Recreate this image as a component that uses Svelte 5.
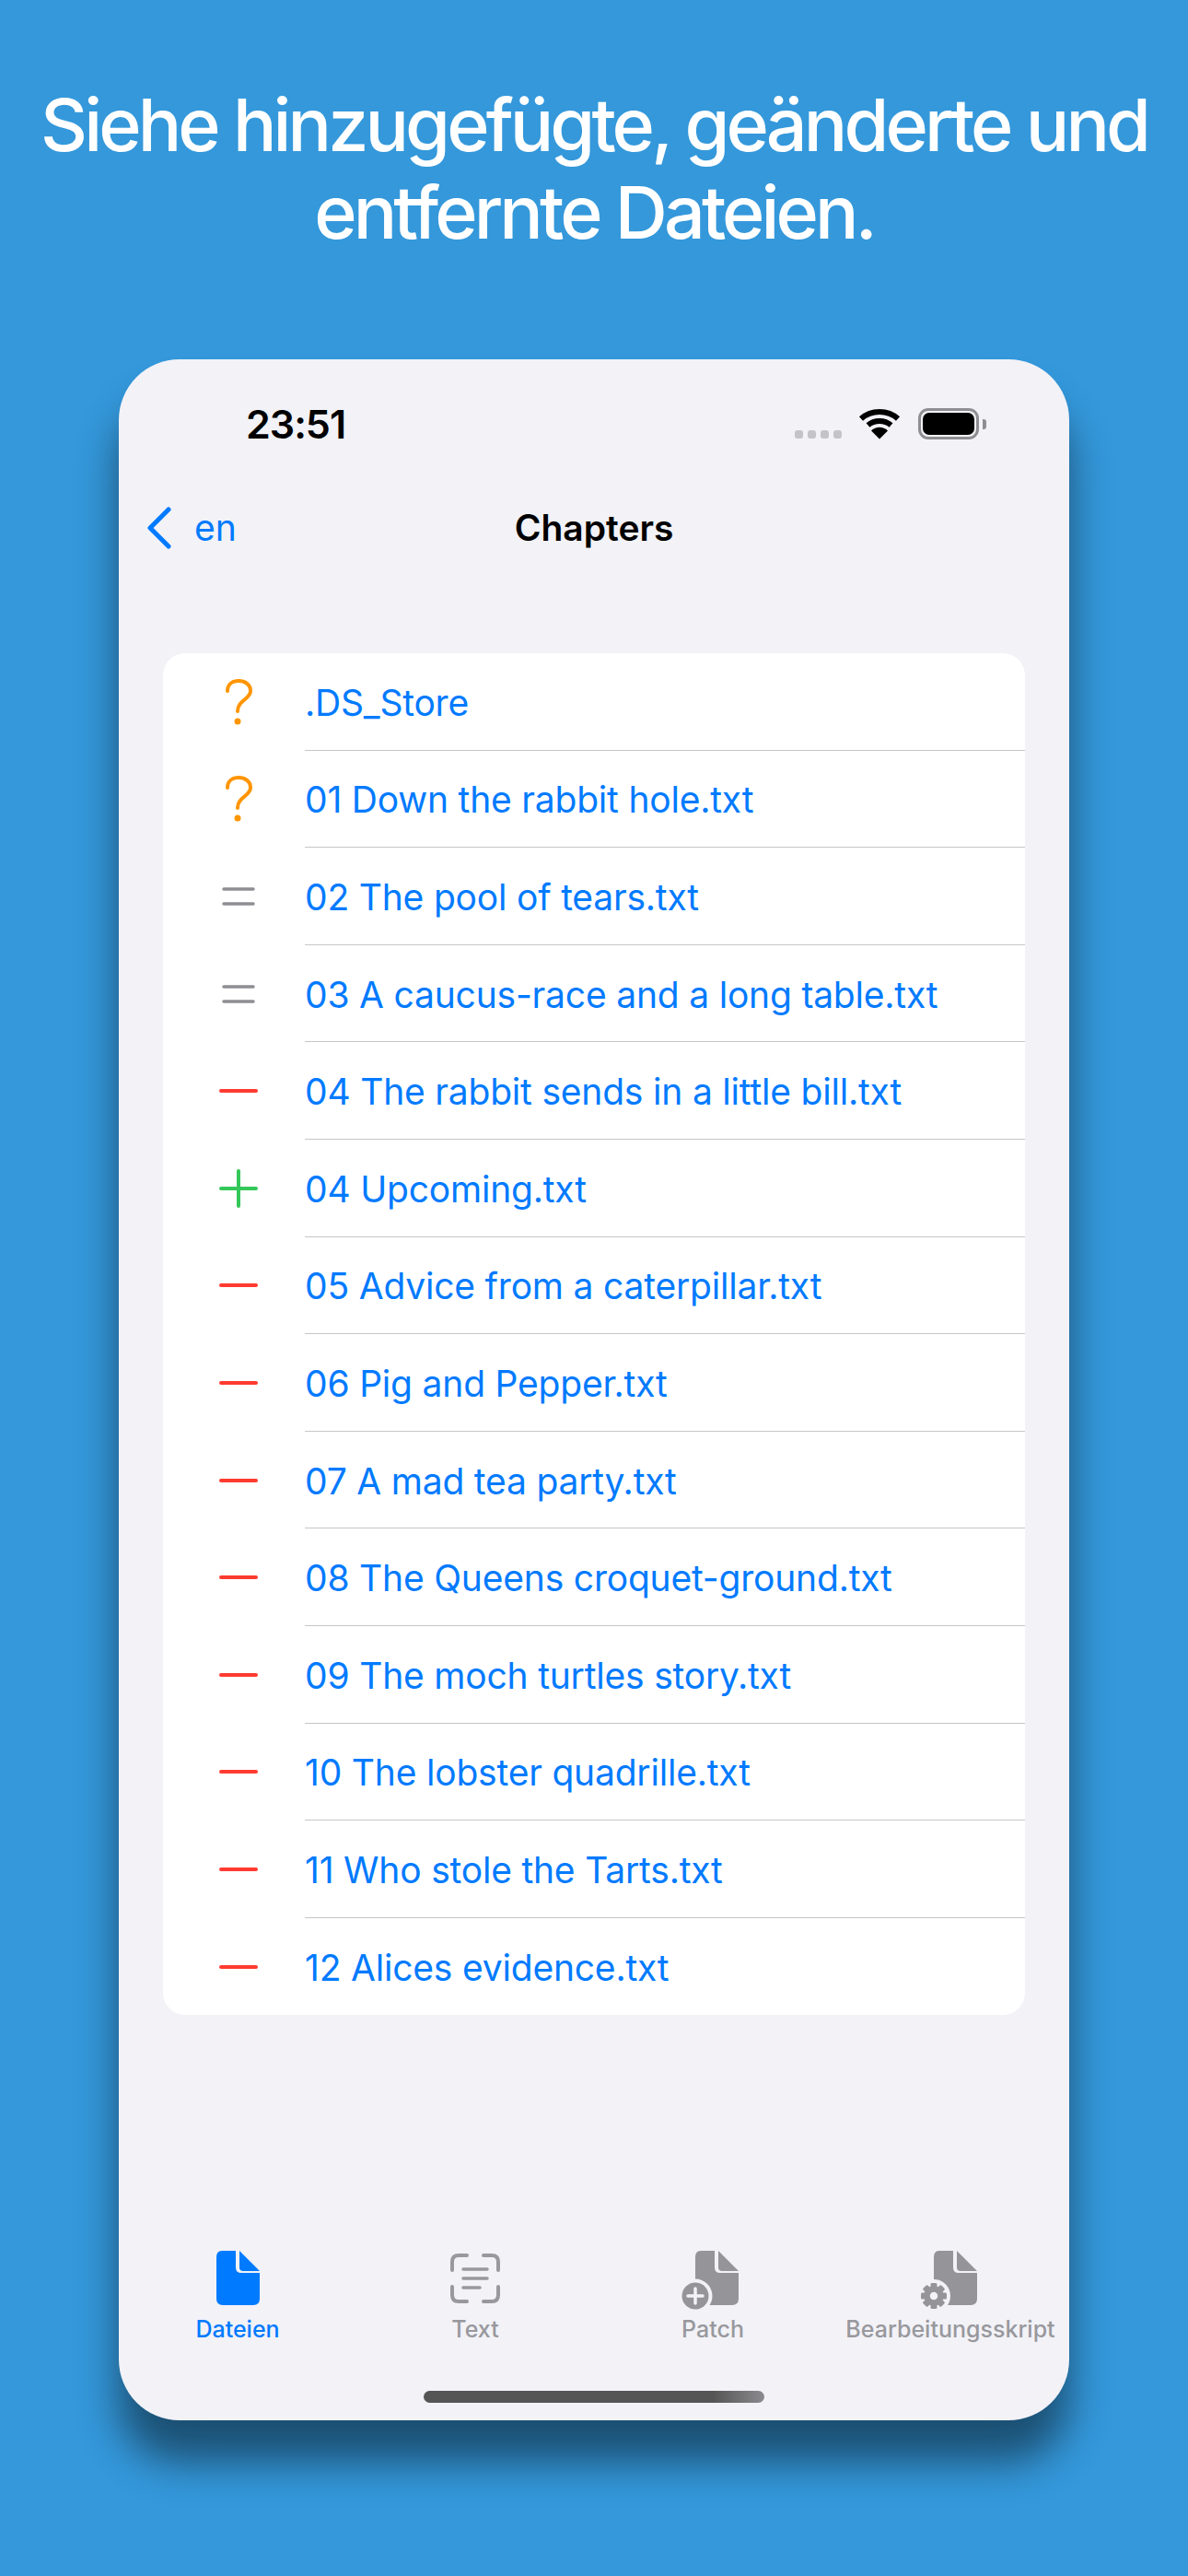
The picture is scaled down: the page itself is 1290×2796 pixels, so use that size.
<script>
  const files = [
    { name: '.DS_Store', s: 'unknown' },
    { name: '01 Down the rabbit hole.txt', s: 'unknown' },
    { name: '02 The pool of tears.txt', s: 'same' },
    { name: '03 A caucus-race and a long table.txt', s: 'same' },
    { name: '04 The rabbit sends in a little bill.txt', s: 'removed' },
    { name: '04 Upcoming.txt', s: 'added' },
    { name: '05 Advice from a caterpillar.txt', s: 'removed' },
    { name: '06 Pig and Pepper.txt', s: 'removed' },
    { name: '07 A mad tea party.txt', s: 'removed' },
    { name: '08 The Queens croquet-ground.txt', s: 'removed' },
    { name: '09 The moch turtles story.txt', s: 'removed' },
    { name: '10 The lobster quadrille.txt', s: 'removed' },
    { name: '11 Who stole the Tarts.txt', s: 'removed' },
    { name: '12 Alices evidence.txt', s: 'removed' }
  ];
  const teeth = [0, 45, 90, 135, 180, 225, 270, 315];
</script>

{#snippet doc()}
  <path d="M6 0H21V18Q21 24 27 24H47V52Q47 59 40 59H7Q0 59 0 52V7Q0 0 6 0Z" />
  <path d="M25 0 47 22H29Q25 22 25 18Z" />
{/snippet}

<div class="page">
  <h1>Siehe hinzugefügte, geänderte und<br />entfernte Dateien.</h1>

  <div class="phone">
    <div class="status">
      <span class="time">23:51</span>
      <div class="status-icons">
        <div class="dots"><i></i><i></i><i></i><i></i></div>
        <svg class="wifi" width="46" height="34" viewBox="0 0 46 34">
          <path d="M3 11.5C14 1.5 32 1.5 43 11.5" fill="none" stroke="#000" stroke-width="6" />
          <path d="M10.5 18.5C17.5 12.5 28.5 12.5 35.5 18.5" fill="none" stroke="#000" stroke-width="6" />
          <path d="M14 24.5C19 19.5 27 19.5 32 24.5L23 33.5Z" fill="#000" />
        </svg>
        <div class="battery"><div class="level"></div></div>
        <div class="tip"></div>
      </div>
    </div>

    <div class="nav">
      <div class="back">
        <svg width="28" height="46" viewBox="0 0 28 46">
          <path d="M24 3 4 23 24 43" fill="none" stroke="#007aff" stroke-width="5" stroke-linecap="round" stroke-linejoin="round" />
        </svg>
        <span>en</span>
      </div>
      <div class="title">Chapters</div>
    </div>

    <div class="card">
      {#each files as f}
        <div class="row">
          <div class="state">
            {#if f.s === 'unknown'}
              <svg width="30" height="50" viewBox="0 0 30 50">
                <path d="M3 13C3 6 8 2 15 2C22 2 28 6 28 13C28 22 14 23 14 35" fill="none" stroke="#ff9500" stroke-width="4" stroke-linecap="round" />
                <circle cx="14" cy="46" r="3.5" fill="#ff9500" />
              </svg>
            {:else if f.s === 'same'}
              <svg width="36" height="22" viewBox="0 0 36 22">
                <path d="M2 3H34M2 19H34" stroke="#8e8e93" stroke-width="3.5" stroke-linecap="round" />
              </svg>
            {:else if f.s === 'removed'}
              <svg width="44" height="6" viewBox="0 0 44 6">
                <path d="M3 3H41" stroke="#ff3b30" stroke-width="4" stroke-linecap="round" />
              </svg>
            {:else}
              <svg width="44" height="44" viewBox="0 0 44 44">
                <path d="M3 22H41M22 3V41" stroke="#34c759" stroke-width="4" stroke-linecap="round" />
              </svg>
            {/if}
          </div>
          <div class="name">{f.name}</div>
        </div>
      {/each}
    </div>

    <div class="tabs">
      <div class="tab active">
        <div class="tab-icon">
          <svg width="47" height="59" viewBox="0 0 47 59" fill="#007aff">{@render doc()}</svg>
        </div>
        <span>Dateien</span>
      </div>
      <div class="tab">
        <div class="tab-icon">
          <svg class="scan" width="54" height="54" viewBox="0 0 54 54" fill="none" stroke="#98989d" stroke-width="4" stroke-linecap="round">
            <path d="M2 18V9Q2 2 9 2H18M36 2H45Q52 2 52 9V18M2 36V45Q2 52 9 52H18M36 52H45Q52 52 52 45V36" />
            <path d="M14 17H40M14 27H40M14 37H32" stroke-width="3.5" />
          </svg>
        </div>
        <span>Text</span>
      </div>
      <div class="tab">
        <div class="tab-icon">
          <svg class="badged" width="62" height="66" viewBox="0 0 62 66" fill="#949499">
            <g transform="translate(15 0)">{@render doc()}</g>
            <circle cx="15" cy="49" r="18.5" fill="#f2f2f7" />
            <circle cx="15" cy="49" r="14.5" />
            <path d="M15 41V57M7 49H23" stroke="#f2f2f7" stroke-width="3.5" stroke-linecap="round" />
          </svg>
        </div>
        <span>Patch</span>
      </div>
      <div class="tab">
        <div class="tab-icon">
          <svg class="geared" width="61" height="66" viewBox="0 0 61 66" fill="#949499">
            <g transform="translate(14 0)">{@render doc()}</g>
            <circle cx="14" cy="49" r="18" fill="#f2f2f7" />
            {#each teeth as a}
              <rect x="10.5" y="35" width="7" height="7" rx="1.5" transform="rotate({a} 14 49)" />
            {/each}
            <circle cx="14" cy="49" r="7.5" fill="none" stroke="#949499" stroke-width="6.5" />
          </svg>
        </div>
        <span>Bearbeitungsskript</span>
      </div>
    </div>

    <div class="home"></div>
  </div>
</div>

<style>
  :global(body) {
    margin: 0;
    background: #3498db;
  }
  .page {
    height: 2796px;
    overflow: hidden;
    background: #3498db;
    font-family: Inter, "Noto Sans", sans-serif;
  }
  h1 {
    margin: 0;
    padding-top: 88px;
    height: 390px;
    box-sizing: border-box;
    text-align: center;
    color: #fff;
    font-size: 79px;
    line-height: 95px;
    font-weight: 500;
    letter-spacing: -3.9px;
  }
  .phone {
    width: 1032px;
    height: 2237px;
    margin: 0 auto;
    background: #f2f2f7;
    border-radius: 66px;
    box-shadow: 0 45px 45px rgba(0, 0, 0, 0.48);
    display: flex;
    flex-direction: column;
  }
  .status {
    height: 140px;
    display: flex;
    align-items: center;
    justify-content: space-between;
    padding: 0 90px 0 138px;
  }
  .time {
    font-size: 43px;
    font-weight: 600;
    color: #000;
    letter-spacing: -1px;
  }
  .status-icons {
    display: flex;
    align-items: center;
    height: 34px;
  }
  .dots {
    display: flex;
    gap: 5px;
    margin-right: 18px;
    align-self: flex-end;
    margin-bottom: 1px;
  }
  .dots i {
    width: 9px;
    height: 9px;
    border-radius: 3px;
    background: #c4c4c8;
  }
  .battery {
    width: 66px;
    height: 34px;
    margin-left: 19px;
    box-sizing: border-box;
    border: 3px solid #8e8e93;
    border-radius: 11px;
    padding: 2px;
  }
  .level {
    height: 100%;
    background: #000;
    border-radius: 7px;
  }
  .tip {
    width: 4px;
    height: 11px;
    margin-left: 4px;
    background: #8e8e93;
    border-radius: 0 3px 3px 0;
  }
  .nav {
    height: 84px;
    display: flex;
    align-items: center;
    justify-content: center;
    position: relative;
  }
  .back {
    position: absolute;
    left: 30px;
    top: 19px;
    display: flex;
    align-items: center;
    gap: 24px;
    color: #007aff;
    font-size: 39px;
  }
  .title {
    font-size: 39px;
    font-weight: 600;
    color: #000;
  }
  .card {
    margin: 95px 48px 0;
    background: #fff;
    border-radius: 24px;
    overflow: hidden;
  }
  .row {
    height: 105.6px;
    display: flex;
    align-items: stretch;
  }
  .state {
    width: 154px;
    flex: none;
    display: flex;
    align-items: center;
    justify-content: center;
    padding-left: 10px;
    box-sizing: border-box;
  }
  .name {
    flex: 1;
    display: flex;
    align-items: center;
    padding-top: 2px;
    color: #007aff;
    font-size: 39px;
    letter-spacing: -0.2px;
    border-bottom: 1px solid #c6c6c8;
    box-sizing: border-box;
  }
  .row:last-child .name {
    border-bottom: none;
  }
  .tabs {
    margin-top: auto;
    display: grid;
    grid-template-columns: repeat(4, 1fr);
    height: 89px;
  }
  .tab {
    display: flex;
    flex-direction: column;
    align-items: center;
    color: #98989d;
    font-size: 25px;
    font-weight: 500;
    white-space: nowrap;
  }
  .tab.active {
    color: #007aff;
  }
  .tab-icon {
    height: 70px;
    display: flex;
    align-items: flex-start;
    justify-content: center;
  }
  .scan {
    margin-top: 3px;
  }
  .badged {
    margin-right: 6px;
  }
  .geared {
    margin-right: 4px;
  }
  .home {
    width: 370px;
    height: 13px;
    flex: none;
    margin: 63px auto 19px;
    border-radius: 7px;
    background: linear-gradient(90deg, #555 0%, #555 85%, #8b8b8f 100%);
  }
</style>
